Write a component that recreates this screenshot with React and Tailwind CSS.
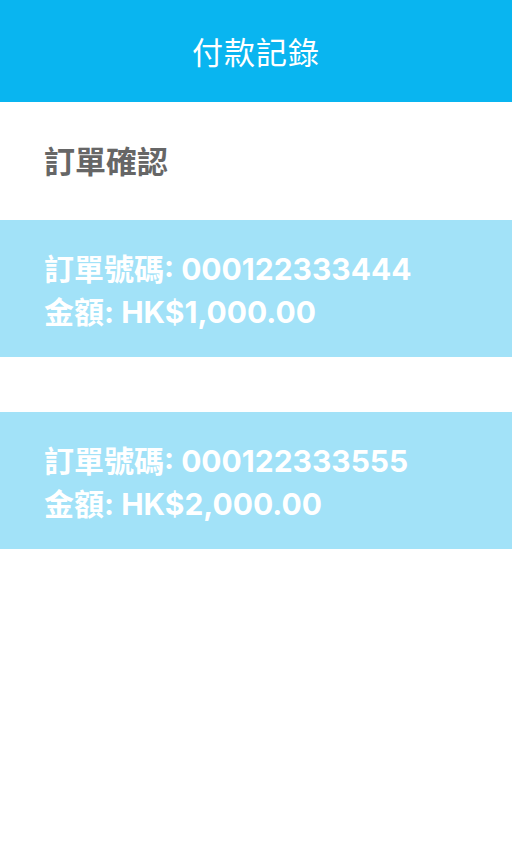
import React from 'react'

const orders = [
  { no: '000122333444', amount: 'HK$1,000.00' },
  { no: '000122333555', amount: 'HK$2,000.00' },
]

const font = { fontFamily: 'Inter, "Noto Sans CJK TC", "Noto Sans", sans-serif' }

export default function App() {
  return (
    <div className="min-h-screen w-[512px] bg-white" style={font}>
      {/* Header */}
      <header className="h-[102px] bg-[#09b5f0] flex items-center justify-center pt-[4px]">
        <h1 className="text-[31px] font-normal text-white tracking-[1px]">付款記錄</h1>
      </header>

      <div className="h-[118px] flex items-center px-[44px]">
        <h2 className="text-[31px] font-bold text-[#666666] leading-none">訂單確認</h2>
      </div>

      <div className="flex flex-col gap-[55px]">
        {orders.map((o) => (
          <div key={o.no} className="h-[137px] bg-[#a2e2f8] flex flex-col justify-center px-[44px] pt-[4px] text-white font-bold text-[30px] leading-[43px]">
            <p>訂單號碼: {o.no}</p>
            <p>金額: {o.amount}</p>
          </div>
        ))}
      </div>
    </div>
  )
}
